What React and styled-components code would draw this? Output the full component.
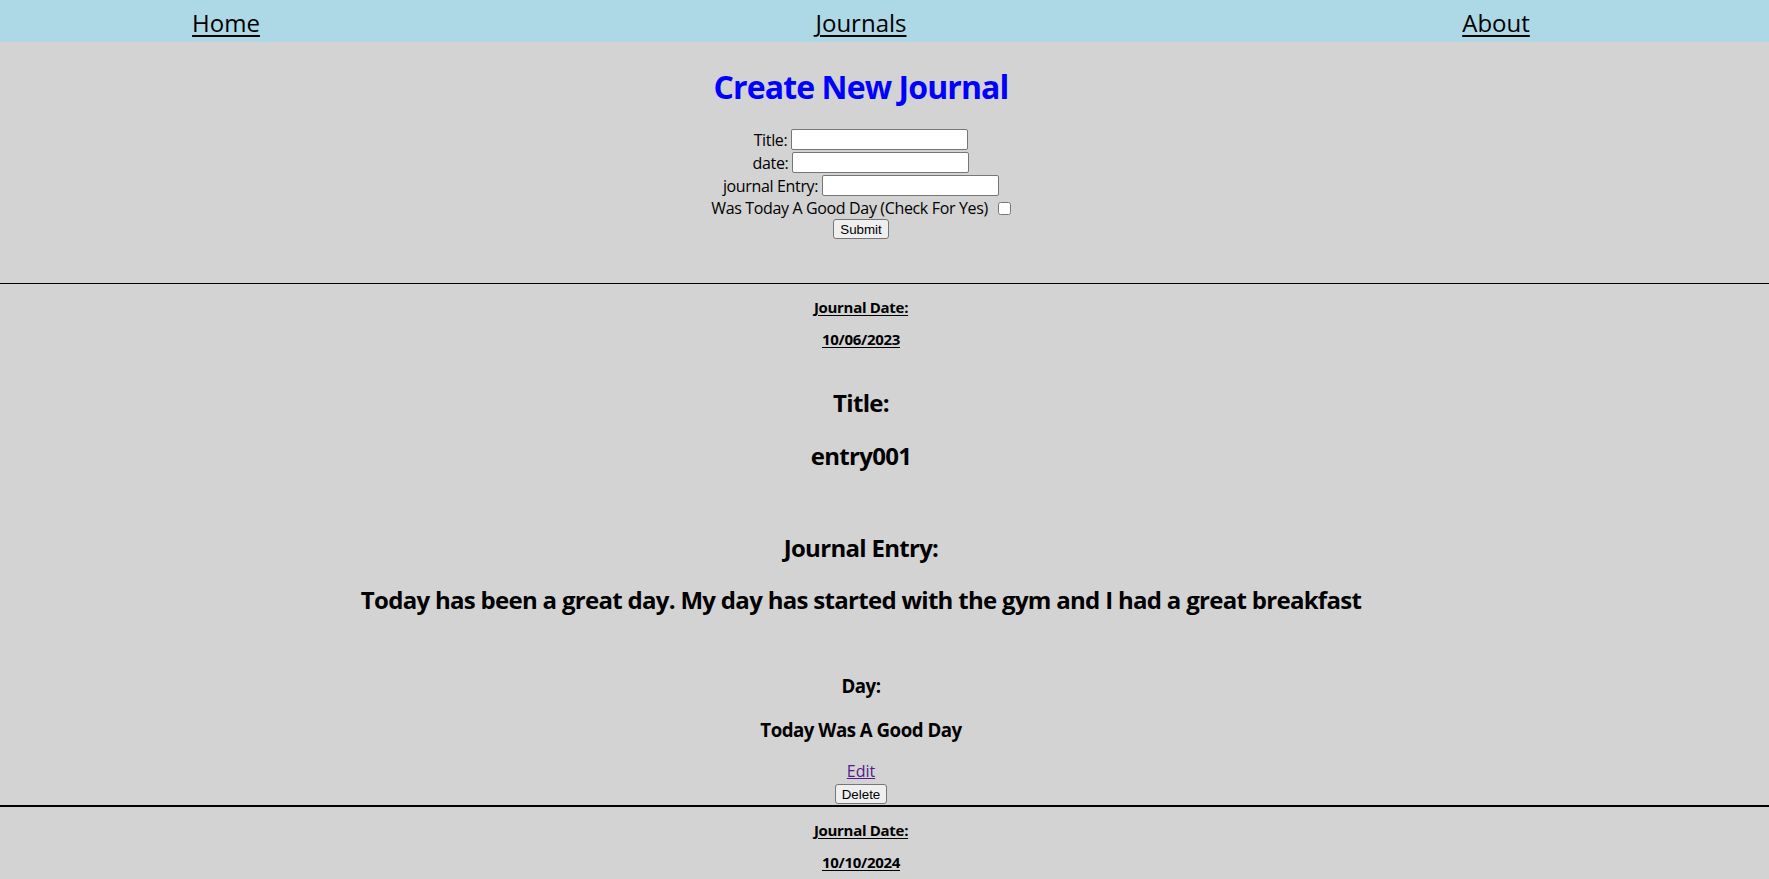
import React from "react";
import styled, { createGlobalStyle } from "styled-components";

const GlobalStyle = createGlobalStyle`
  body {
    margin: 0;
    background: lightgray;
    color: black;
    font-family: "Open Sans", "Noto Sans", sans-serif;
  }
`;

const Nav = styled.nav`
  display: flex;
  justify-content: center;
  gap: 515px;
  box-sizing: border-box;
  height: 42px;
  padding: 4px 47px 0 0;
  background: lightblue;
`;

const NavLink = styled.a`
  width: 120px;
  text-align: center;
  font-size: 24px;
  line-height: 38px;
  color: black;
  text-decoration: underline;
  text-decoration-thickness: 2px;
  text-underline-offset: 3px;
`;

const Header = styled.section`
  display: flex;
  flex-direction: column;
  align-items: center;
  padding: 24px 47px 44px 0;
`;

const Heading = styled.h1`
  margin: 0;
  font-size: 32px;
  line-height: 42px;
  font-weight: 700;
  color: blue;
  letter-spacing: -0.9px;
`;

const Form = styled.form`
  display: flex;
  flex-direction: column;
  align-items: center;
  margin-top: 20px;
  font-size: 16px;
  letter-spacing: -0.35px;
`;

const Row = styled.label`
  display: flex;
  align-items: center;
  gap: ${(p) => p.$gap || 4}px;
  height: ${(p) => p.$h || 23}px;
`;

const TextInput = styled.input`
  box-sizing: border-box;
  width: 177px;
  height: 21px;
  margin: 0;
  border: 1px solid #767676;
  border-radius: 2px;
  background: white;
`;

const Check = styled.input`
  width: 13px;
  height: 13px;
  margin: 0;
`;

const Button = styled.button`
  box-sizing: border-box;
  height: 20px;
  padding: 0 6px;
  border: 1px solid #767676;
  border-radius: 3px;
  background: #efefef;
  font-family: "Liberation Sans", Arial, sans-serif;
  font-size: 13.33px;
  letter-spacing: 0;
  color: black;
`;

const Card = styled.article`
  display: flex;
  flex-direction: column;
  align-items: center;
  padding: 13px 47px 1px 0;
  border-top: 1px solid black;
  border-bottom: 1px solid black;
`;

const Group = styled.div`
  display: flex;
  flex-direction: column;
  align-items: center;
  gap: ${(p) => p.$gap}px;
  margin-top: ${(p) => p.$mt}px;
`;

const sizes = {
  sm: { font: 15, line: 20, spacing: -0.3 },
  md: { font: 18.7, line: 25, spacing: -0.5 },
  lg: { font: 24, line: 32, spacing: -0.7 },
};

const Line = styled.div`
  font-size: ${(p) => sizes[p.$size].font}px;
  line-height: ${(p) => sizes[p.$size].line}px;
  font-weight: 700;
  letter-spacing: ${(p) => sizes[p.$size].spacing}px;
  text-decoration: ${(p) => (p.$underline ? "underline" : "none")};
  text-underline-offset: 2px;
`;

const EditLink = styled.a`
  font-size: 16px;
  line-height: 21px;
  color: #551a8b;
  text-decoration: underline;
`;

const journals = [
  {
    date: "10/06/2023",
    title: "entry001",
    entry:
      "Today has been a great day. My day has started with the gym and I had a great breakfast",
    good: true,
  },
  {
    date: "10/10/2024",
    title: "entry002",
    entry: "Worked on the journal app and went for a long walk in the evening",
    good: true,
  },
];

const JournalCard = ({ j }) => (
  <Card>
    <Group $gap={12} $mt={0}>
      <Line $size="sm" $underline>Journal Date:</Line>
      <Line $size="sm" $underline>{j.date}</Line>
    </Group>
    <Group $gap={21} $mt={38}>
      <Line $size="lg">Title:</Line>
      <Line $size="lg">{j.title}</Line>
    </Group>
    <Group $gap={20} $mt={60}>
      <Line $size="lg">Journal Entry:</Line>
      <Line $size="lg">{j.entry}</Line>
    </Group>
    <Group $gap={19} $mt={57}>
      <Line $size="md">Day:</Line>
      <Line $size="md">{j.good ? "Today Was A Good Day" : "Today Was A Bad Day"}</Line>
    </Group>
    <Group $gap={2} $mt={19}>
      <EditLink href="#edit">Edit</EditLink>
      <Button type="button">Delete</Button>
    </Group>
  </Card>
);

const App = () => {
  return (
    <>
      <GlobalStyle />
      <Nav>
        <NavLink href="#home">Home</NavLink>
        <NavLink href="#journals">Journals</NavLink>
        <NavLink href="#about">About</NavLink>
      </Nav>
      <Header>
        <Heading>Create New Journal</Heading>
        <Form onSubmit={(e) => e.preventDefault()}>
          <Row>
            Title: <TextInput type="text" />
          </Row>
          <Row>
            date: <TextInput type="text" />
          </Row>
          <Row>
            journal Entry: <TextInput type="text" />
          </Row>
          <Row $gap={10} $h={22}>
            Was Today A Good Day (Check For Yes) <Check type="checkbox" />
          </Row>
          <Button type="submit">Submit</Button>
        </Form>
      </Header>
      {journals.map((j) => (
        <JournalCard key={j.date} j={j} />
      ))}
    </>
  );
};

export default App;
